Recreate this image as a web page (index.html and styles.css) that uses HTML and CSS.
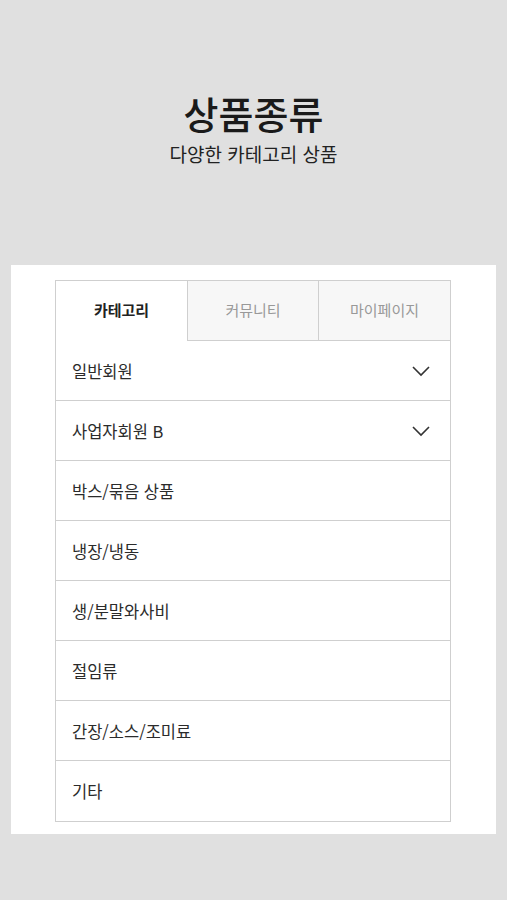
FILE: index.html
```html
<!DOCTYPE html>
<html lang="ko">
    <head>
      <meta charset="utf-8">
      <title>상품종류</title>
      <link rel="stylesheet" href="styles.css">
    </head>
    <body>
        <div class="page-head">
            <h1 class="title">상품종류</h1>
            <p class="subtitle">다양한 카테고리 상품</p>
        </div>
        <div class="panel">
            <div class="box">
                <ul class="tabs">
                    <li class="tab on">카테고리</li>
                    <li class="tab">커뮤니티</li>
                    <li class="tab">마이페이지</li>
                </ul>
                <ul class="menu">
                    <li class="item">일반회원
                        <svg class="arrow" width="20" height="12" viewBox="0 0 20 12"><polyline points="2,2 10,10 18,2" fill="none" stroke="#333" stroke-width="1.6"/></svg>
                    </li>
                    <li class="item">사업자회원 B
                        <svg class="arrow" width="20" height="12" viewBox="0 0 20 12"><polyline points="2,2 10,10 18,2" fill="none" stroke="#333" stroke-width="1.6"/></svg>
                    </li>
                    <li class="item">박스/묶음 상품</li>
                    <li class="item">냉장/냉동</li>
                    <li class="item">생/분말와사비</li>
                    <li class="item">절임류</li>
                    <li class="item">간장/소스/조미료</li>
                    <li class="item">기타</li>
                </ul>
            </div>
        </div>
    </body>
</html>
```

FILE: styles.css
```css
*{
    box-sizing: border-box;
}
body{
    margin: 0;
    background: #e0e0e0;
    font-family: "Noto Sans CJK KR", "Noto Sans", sans-serif;
    color: #222;
}
ul,li{
    list-style: none;
    margin: 0;
    padding: 0;
}
.page-head{
    padding-top: 90px;
    padding-bottom: 98px;
    text-align: center;
}
.title{
    margin: 0;
    font-size: 38px;
    line-height: 46px;
    font-weight: 500;
    color: #1a1a1a;
}
.subtitle{
    margin: 5px 0 0;
    font-size: 19px;
    line-height: 26px;
    color: #222;
}
.panel{
    margin: 0 11px;
    background: #fff;
    padding: 15px 45px 12px 44px;
}
.box{
    border: 1px solid #cfcfcf;
}
.tabs{
    display: grid;
    grid-template-columns: 131px 131px 1fr;
}
.tab{
    height: 60px;
    line-height: 58px;
    text-align: center;
    font-size: 15px;
    color: #999;
    background: #f7f7f7;
    border-left: 1px solid #cfcfcf;
    border-bottom: 1px solid #cfcfcf;
}
.tab.on{
    background: #fff;
    color: #222;
    font-weight: 700;
    border-left: none;
    border-bottom-color: #fff;
}
.item{
    display: flex;
    align-items: center;
    justify-content: space-between;
    height: 60px;
    padding: 0 19px 0 16px;
    font-size: 16.5px;
    color: #2b2b2b;
    border-bottom: 1px solid #cfcfcf;
}
.item:last-child{
    border-bottom: none;
}
.arrow{
    display: block;
}
```
